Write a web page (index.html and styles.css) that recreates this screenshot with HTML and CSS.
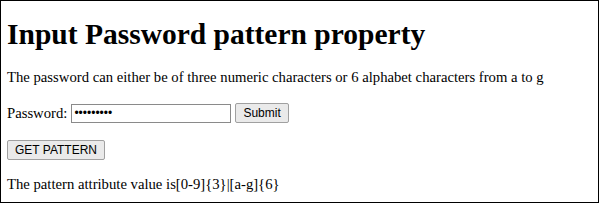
FILE: index.html
```html
<!DOCTYPE html>
<html lang="en">
<head>
  <meta charset="UTF-8" />
  <title>Input Password pattern property</title>
  <link rel="stylesheet" href="styles.css">
</head>
<body>
  <div class="frame">
    <h1>Input Password pattern property</h1>
    <p>The password can either be of three numeric characters or 6 alphabet characters from a to g</p>
    <form class="row">
      Password: <input type="password" id="pass" value="abcdefghi" pattern="[0-9]{3}|[a-g]{6}">
      <input type="submit" value="Submit">
    </form>
    <button type="button" class="btn" id="getBtn">GET PATTERN</button>
    <p class="result">The pattern attribute value is[0-9]{3}|[a-g]{6}</p>
  </div>
</body>
</html>
```

FILE: styles.css
```css
* { box-sizing: border-box; }

body {
  margin: 0;
  font-family: "Liberation Serif", serif;
  font-size: 14.7px;
  color: #000;
  background: #fff;
}

.frame {
  width: 599px;
  height: 203px;
  border: 1px solid #000;
  padding: 0 6px;
  overflow: hidden;
}

h1 {
  font-size: 29.5px;
  margin: 15px 0 0;
  line-height: 36px;
}

p {
  margin: 17px 0;
}

.row {
  margin: 0;
  display: flex;
  align-items: center;
  gap: 4px;
}

.row input[type="password"] {
  width: 160px;
  height: 19px;
  border: 1px solid #8a8a8a;
  padding: 1px 2px;
  font-size: 12px;
  margin: 0;
}

.row input[type="submit"],
.btn {
  font-family: "Liberation Sans", Arial, sans-serif;
  font-size: 12px;
  height: 20px;
  padding: 0 7px;
  background: #eaeaea;
  border: 1px solid #a0a0a0;
  border-radius: 2px;
  color: #000;
  margin: 0;
}

.btn {
  margin-top: 17px;
}

.result {
  margin: 16px 0 0;
}
```
